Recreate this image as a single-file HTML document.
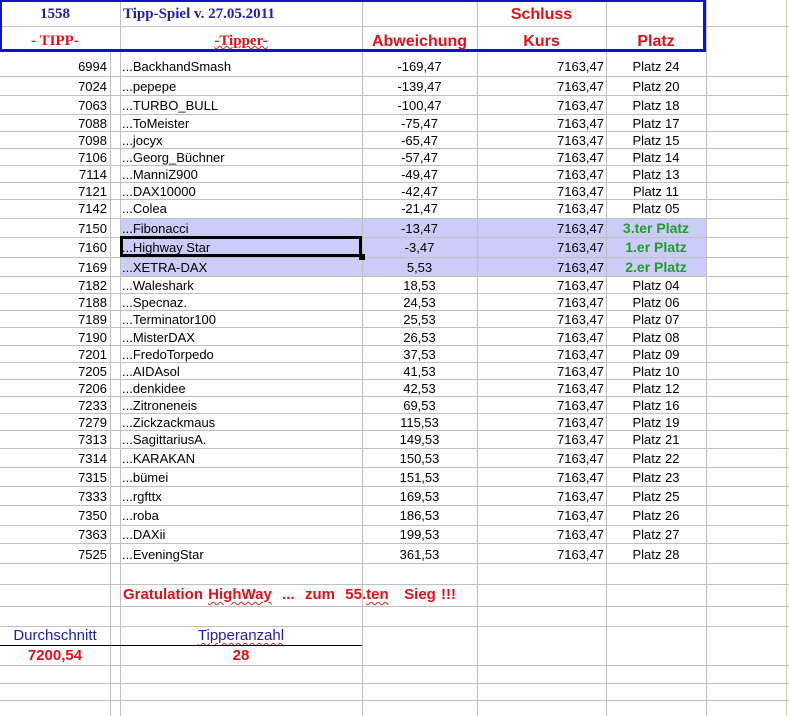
<!DOCTYPE html>
<html><head><meta charset="utf-8"><style>
body{margin:0;width:789px;height:716px;background:#fff;position:relative;overflow:hidden;font-family:"Liberation Sans",Arial,sans-serif;}
.v{position:absolute;top:0;height:716px;width:1px;background:#c0c0c0}
.h{position:absolute;left:0;width:789px;height:1px;background:#c0c0c0}
.r{position:absolute;left:0;width:789px;font-size:13px;color:#000}
.r span{position:absolute;bottom:0px;white-space:nowrap}
.a{right:682px;text-align:right}
.b{left:122px}
.c{left:362px;width:115px;text-align:center}
.d{right:185px;text-align:right}
.e{left:606px;width:100px;text-align:center}
.g{color:#1e9e2a;font-weight:bold;font-size:14px;bottom:0!important}
.hl{position:absolute;left:120px;width:586px;top:218px;height:58px;background:#ccccf8}
.t{position:absolute;white-space:nowrap}
.ser{font-family:"Liberation Serif",serif;font-weight:bold;font-size:15px}
.red{color:#e0101a}
.blue{color:#2020b0}
.sq{text-decoration:underline wavy #e02020;text-decoration-thickness:1px;text-underline-offset:2px}
</style></head><body>
<div class="hl"></div>
<div class="v" style="left:110px"></div>
<div class="v" style="left:120px"></div>
<div class="v" style="left:362px"></div>
<div class="v" style="left:477px"></div>
<div class="v" style="left:606px"></div>
<div class="v" style="left:706px"></div>
<div class="v" style="left:786px;background:#d8d0a0"></div>
<div class="h" style="top:26px"></div>
<div class="h" style="top:76px"></div><div class="h" style="top:95px"></div><div class="h" style="top:114px"></div><div class="h" style="top:131px"></div><div class="h" style="top:148px"></div><div class="h" style="top:165px"></div><div class="h" style="top:182px"></div><div class="h" style="top:199px"></div><div class="h" style="top:218px"></div><div class="h" style="top:237px"></div><div class="h" style="top:257px"></div><div class="h" style="top:276px"></div><div class="h" style="top:293px"></div><div class="h" style="top:310px"></div><div class="h" style="top:327px"></div><div class="h" style="top:345px"></div><div class="h" style="top:362px"></div><div class="h" style="top:379px"></div><div class="h" style="top:396px"></div><div class="h" style="top:413px"></div><div class="h" style="top:430px"></div><div class="h" style="top:448px"></div><div class="h" style="top:467px"></div><div class="h" style="top:486px"></div><div class="h" style="top:505px"></div><div class="h" style="top:525px"></div><div class="h" style="top:543px"></div><div class="h" style="top:563px"></div><div class="h" style="top:584px"></div><div class="h" style="top:606px"></div><div class="h" style="top:626px"></div><div class="h" style="top:665px"></div><div class="h" style="top:683px"></div><div class="h" style="top:700px"></div>
<div style="position:absolute;left:0;top:0;width:706px;height:52px;background:#fff;border-top:2px solid #1010d0;border-left:2px solid #1010d0;border-right:3px solid #1010d0;border-bottom:3px solid #1010d0;box-sizing:border-box"></div>
<div class="h" style="top:26px;left:2px;width:701px"></div>
<div style="position:absolute;left:120px;top:2px;width:1px;height:47px;background:#c0c0c0"></div>
<div style="position:absolute;left:362px;top:2px;width:1px;height:47px;background:#c0c0c0"></div>
<div style="position:absolute;left:477px;top:2px;width:1px;height:47px;background:#c0c0c0"></div>
<div style="position:absolute;left:606px;top:2px;width:1px;height:47px;background:#c0c0c0"></div>
<div class="t ser blue" style="left:0;width:110px;text-align:center;top:6px">1558</div>
<div class="t ser blue" style="left:123px;top:6px">Tipp-Spiel v. 27.05.2011</div>
<div class="t ser red" style="left:0;width:110px;text-align:center;top:33px">- TIPP-</div>
<div class="t ser red" style="left:120px;width:242px;text-align:center;top:33px"><span class="sq" style="text-underline-offset:0px">-Tipper-</span></div>
<div class="t red" style="left:362px;width:115px;text-align:center;top:33px;font-weight:bold;font-size:16px">Abweichung</div>
<div class="t red" style="left:477px;width:129px;text-align:center;top:6px;font-weight:bold;font-size:16px">Schluss</div>
<div class="t red" style="left:477px;width:129px;text-align:center;top:33px;font-weight:bold;font-size:16px">Kurs</div>
<div class="t red" style="left:606px;width:100px;text-align:center;top:33px;font-weight:bold;font-size:16px">Platz</div>

<div class="r" style="top:57px;height:17px"><span class="a">6994</span><span class="b">...BackhandSmash</span><span class="c">-169,47</span><span class="d">7163,47</span><span class="e">Platz 24</span></div>
<div class="r" style="top:77px;height:17px"><span class="a">7024</span><span class="b">...pepepe</span><span class="c">-139,47</span><span class="d">7163,47</span><span class="e">Platz 20</span></div>
<div class="r" style="top:96px;height:17px"><span class="a">7063</span><span class="b">...TURBO_BULL</span><span class="c">-100,47</span><span class="d">7163,47</span><span class="e">Platz 18</span></div>
<div class="r" style="top:114px;height:17px"><span class="a">7088</span><span class="b">...ToMeister</span><span class="c">-75,47</span><span class="d">7163,47</span><span class="e">Platz 17</span></div>
<div class="r" style="top:131px;height:17px"><span class="a">7098</span><span class="b">...jocyx</span><span class="c">-65,47</span><span class="d">7163,47</span><span class="e">Platz 15</span></div>
<div class="r" style="top:148px;height:17px"><span class="a">7106</span><span class="b">...Georg_Büchner</span><span class="c">-57,47</span><span class="d">7163,47</span><span class="e">Platz 14</span></div>
<div class="r" style="top:165px;height:17px"><span class="a">7114</span><span class="b">...ManniZ900</span><span class="c">-49,47</span><span class="d">7163,47</span><span class="e">Platz 13</span></div>
<div class="r" style="top:182px;height:17px"><span class="a">7121</span><span class="b">...DAX10000</span><span class="c">-42,47</span><span class="d">7163,47</span><span class="e">Platz 11</span></div>
<div class="r" style="top:199px;height:17px"><span class="a">7142</span><span class="b">...Colea</span><span class="c">-21,47</span><span class="d">7163,47</span><span class="e">Platz 05</span></div>
<div class="r" style="top:219px;height:17px"><span class="a">7150</span><span class="b">...Fibonacci</span><span class="c">-13,47</span><span class="d">7163,47</span><span class="e g">3.ter Platz</span></div>
<div class="r" style="top:238px;height:17px"><span class="a">7160</span><span class="b">...Highway Star</span><span class="c">-3,47</span><span class="d">7163,47</span><span class="e g">1.er Platz</span></div>
<div class="r" style="top:258px;height:17px"><span class="a">7169</span><span class="b">...XETRA-DAX</span><span class="c">5,53</span><span class="d">7163,47</span><span class="e g">2.er Platz</span></div>
<div class="r" style="top:276px;height:17px"><span class="a">7182</span><span class="b">...Waleshark</span><span class="c">18,53</span><span class="d">7163,47</span><span class="e">Platz 04</span></div>
<div class="r" style="top:293px;height:17px"><span class="a">7188</span><span class="b">...Specnaz.</span><span class="c">24,53</span><span class="d">7163,47</span><span class="e">Platz 06</span></div>
<div class="r" style="top:310px;height:17px"><span class="a">7189</span><span class="b">...Terminator100</span><span class="c">25,53</span><span class="d">7163,47</span><span class="e">Platz 07</span></div>
<div class="r" style="top:328px;height:17px"><span class="a">7190</span><span class="b">...MisterDAX</span><span class="c">26,53</span><span class="d">7163,47</span><span class="e">Platz 08</span></div>
<div class="r" style="top:345px;height:17px"><span class="a">7201</span><span class="b">...FredoTorpedo</span><span class="c">37,53</span><span class="d">7163,47</span><span class="e">Platz 09</span></div>
<div class="r" style="top:362px;height:17px"><span class="a">7205</span><span class="b">...AIDAsol</span><span class="c">41,53</span><span class="d">7163,47</span><span class="e">Platz 10</span></div>
<div class="r" style="top:379px;height:17px"><span class="a">7206</span><span class="b">...denkidee</span><span class="c">42,53</span><span class="d">7163,47</span><span class="e">Platz 12</span></div>
<div class="r" style="top:396px;height:17px"><span class="a">7233</span><span class="b">...Zitroneneis</span><span class="c">69,53</span><span class="d">7163,47</span><span class="e">Platz 16</span></div>
<div class="r" style="top:413px;height:17px"><span class="a">7279</span><span class="b">...Zickzackmaus</span><span class="c">115,53</span><span class="d">7163,47</span><span class="e">Platz 19</span></div>
<div class="r" style="top:430px;height:17px"><span class="a">7313</span><span class="b">...SagittariusA.</span><span class="c">149,53</span><span class="d">7163,47</span><span class="e">Platz 21</span></div>
<div class="r" style="top:449px;height:17px"><span class="a">7314</span><span class="b">...KARAKAN</span><span class="c">150,53</span><span class="d">7163,47</span><span class="e">Platz 22</span></div>
<div class="r" style="top:468px;height:17px"><span class="a">7315</span><span class="b">...bümei</span><span class="c">151,53</span><span class="d">7163,47</span><span class="e">Platz 23</span></div>
<div class="r" style="top:487px;height:17px"><span class="a">7333</span><span class="b">...rgfttx</span><span class="c">169,53</span><span class="d">7163,47</span><span class="e">Platz 25</span></div>
<div class="r" style="top:506px;height:17px"><span class="a">7350</span><span class="b">...roba</span><span class="c">186,53</span><span class="d">7163,47</span><span class="e">Platz 26</span></div>
<div class="r" style="top:525px;height:17px"><span class="a">7363</span><span class="b">...DAXii</span><span class="c">199,53</span><span class="d">7163,47</span><span class="e">Platz 27</span></div>
<div class="r" style="top:545px;height:17px"><span class="a">7525</span><span class="b">...EveningStar</span><span class="c">361,53</span><span class="d">7163,47</span><span class="e">Platz 28</span></div>

<div style="position:absolute;left:120px;top:236px;width:242px;height:21px;border:3px solid #000;box-sizing:border-box"></div>
<div style="position:absolute;left:359px;top:254px;width:6px;height:6px;background:#000"></div>

<div class="t red" style="left:123px;top:586px;font-weight:bold;font-size:15px;word-spacing:1px">Gratulation <span class="sq">HighWay</span> &nbsp;... &nbsp;zum &nbsp;55.<span class="sq">ten</span> &nbsp; Sieg !!!</div>
<div class="t blue" style="left:0;width:110px;text-align:center;top:627px;font-size:15px">Durchschnitt</div>
<div class="t blue" style="left:120px;width:242px;text-align:center;top:627px;font-size:15px"><span class="sq">Tipperanzahl</span></div>
<div style="position:absolute;left:0;top:645px;width:362px;height:1px;background:#000"></div>
<div class="t red" style="left:0;width:110px;text-align:center;top:647px;font-size:15px;font-weight:bold">7200,54</div>
<div class="t red" style="left:120px;width:242px;text-align:center;top:647px;font-size:15px;font-weight:bold">28</div>
</body></html>
